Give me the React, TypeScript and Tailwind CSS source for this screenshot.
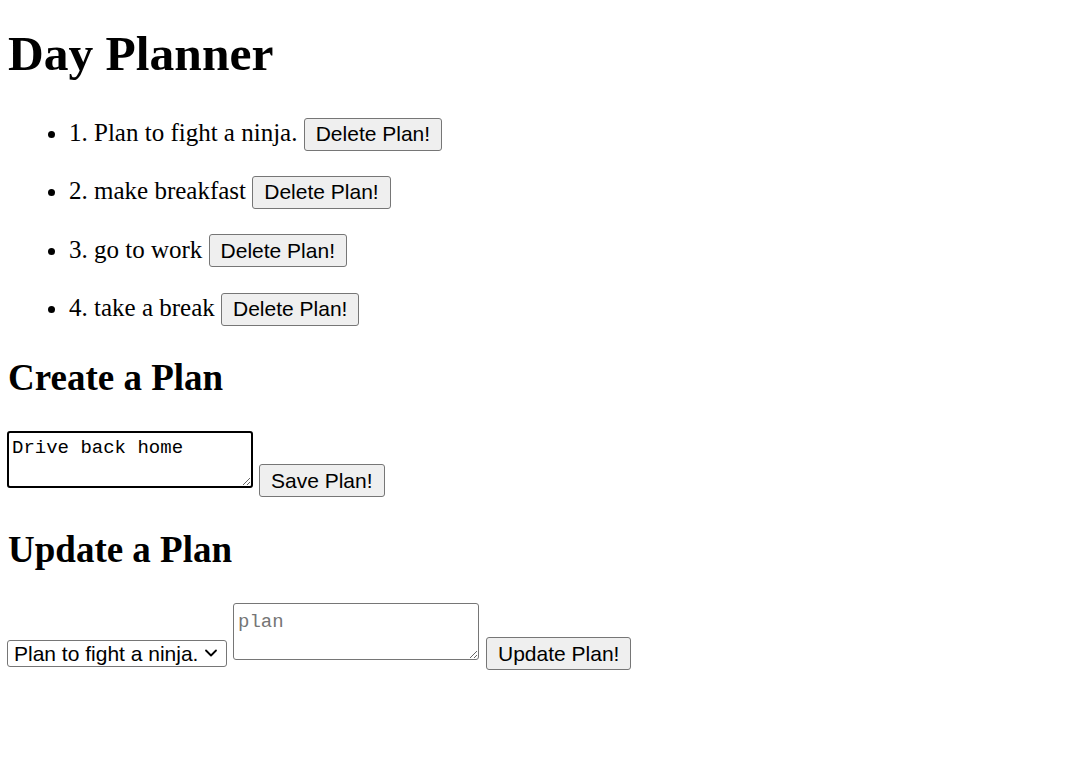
import React from 'react';
import { ChevronDown } from 'lucide-react';

const plans = ['Plan to fight a ninja.', 'make breakfast', 'go to work', 'take a break'];

const btn =
  "h-[33px] px-[11px] bg-[#efefef] border border-[#767676] rounded-[3px] text-[21px] leading-[24px] text-black font-['Liberation_Sans',Arial,sans-serif]";

const App = () => {
  return (
    <div className="min-h-screen bg-white pl-[7px] text-black font-['Liberation_Serif','Times_New_Roman',serif]">
      {/* Header */}
      <h1 className="pt-[26px] pl-[1px] text-[49.5px] leading-[56px] font-bold">Day Planner</h1>

      {/* Plans */}
      <ul className="mt-[35px] list-disc pl-[62px] flex flex-col gap-[26.4px]">
        {plans.map((plan, i) => (
          <li key={i} className="h-[32px] text-[25px] leading-[32px]">
            {i + 1}. {plan}{' '}
            <button className={`${btn} align-baseline`}>Delete Plan!</button>
          </li>
        ))}
      </ul>

      {/* Create */}
      <h2 className="mt-[32px] pl-[1px] text-[37px] leading-[43px] font-bold">Create a Plan</h2>
      <div className="mt-[32px] flex items-start gap-[6px]">
        <textarea
          defaultValue="Drive back home"
          className="w-[246px] h-[57px] border-2 border-black rounded-[3px] px-[3px] pt-[4px] text-[19px] leading-[22px] font-['Liberation_Mono','DejaVu_Sans_Mono',monospace] outline-none"
        />
        <button className={`${btn} mt-[33px]`}>Save Plan!</button>
      </div>

      {/* Update */}
      <h2 className="mt-[31px] pl-[1px] text-[37px] leading-[43px] font-bold">Update a Plan</h2>
      <div className="mt-[32px] flex items-start">
        <div className="relative mt-[37px] w-[220px] h-[27px]">
          <select className="appearance-none w-full h-full border border-[#767676] rounded-[3px] pl-[6px] pr-[26px] text-[21px] leading-[24px] bg-white font-['Liberation_Sans',Arial,sans-serif]">
            {plans.map((p, i) => (
              <option key={i}>{p}</option>
            ))}
          </select>
          <ChevronDown className="absolute right-[6px] top-[3px] w-[20px] h-[20px] pointer-events-none" strokeWidth={2.2} />
        </div>
        <textarea
          placeholder="plan"
          className="ml-[6px] w-[246px] h-[57px] border border-[#767676] rounded-[3px] px-[4px] pt-[7px] text-[19px] leading-[22px] placeholder:text-[#757575] font-['Liberation_Mono','DejaVu_Sans_Mono',monospace] outline-none"
        />
        <button className={`${btn} ml-[7px] mt-[34px]`}>Update Plan!</button>
      </div>
    </div>
  );
};

export default App;
